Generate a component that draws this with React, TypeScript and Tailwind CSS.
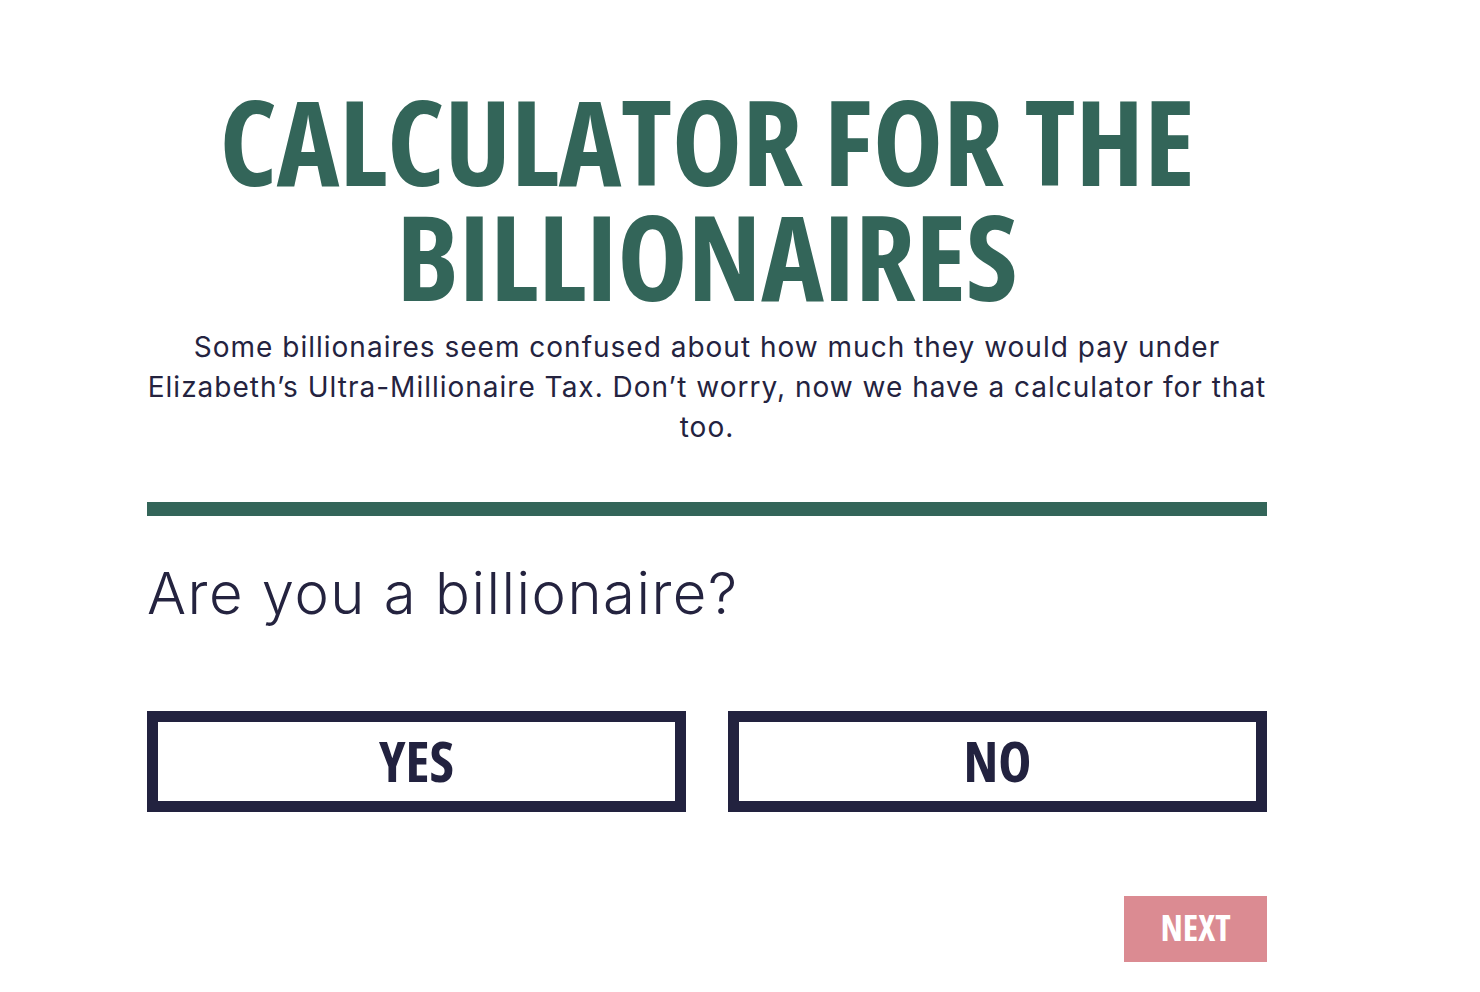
const heading = "font-['Open_Sans',sans-serif] font-bold font-stretch-condensed uppercase";
const body = "font-['Inter','Roboto',sans-serif]";

export default function App() {
  return (
    <main className="min-h-screen bg-white text-[#24233f]">
      <div className="ml-[147px] w-[1120px] pt-[83px]">
        {/* Title */}
        <h1 className={`${heading} text-center text-[119px] leading-[115px] text-[#336559] tracking-[-0.3px]`}>
          Calculator for the
          <br />
          Billionaires
        </h1>

        <p className={`${body} -mx-[3px] mt-[14px] text-center text-[28px] leading-[40px] tracking-[1px]`}>
          Some billionaires seem confused about how much they would pay under Elizabeth’s Ultra-Millionaire Tax. Don’t worry, now we have a calculator for that too.
        </p>

        <div className="mt-[55px] h-[14px] bg-[#336559]" />

        {/* Question */}
        <h2 className={`${body} mt-[42px] text-[58px] leading-[70px] font-light tracking-[1.5px]`}>
          Are you a billionaire?
        </h2>

        <div className="mt-[83px] grid grid-cols-2 gap-[42px]">
          <AnswerButton label="Yes" />
          <AnswerButton label="No" />
        </div>

        <div className="mt-[84px] flex justify-end">
          <button className={`${heading} h-[66px] w-[143px] bg-[#db8b92] pb-[2px] text-[36px] text-white`}>
            Next
          </button>
        </div>
      </div>
    </main>
  );
}

function AnswerButton({ label }: { label: string }) {
  return (
    <button
      className={`${heading} flex h-[101px] items-center justify-center border-[11px] border-[#22223f] bg-white pb-[4px] text-[56px] text-[#22223f]`}
    >
      {label}
    </button>
  );
}
